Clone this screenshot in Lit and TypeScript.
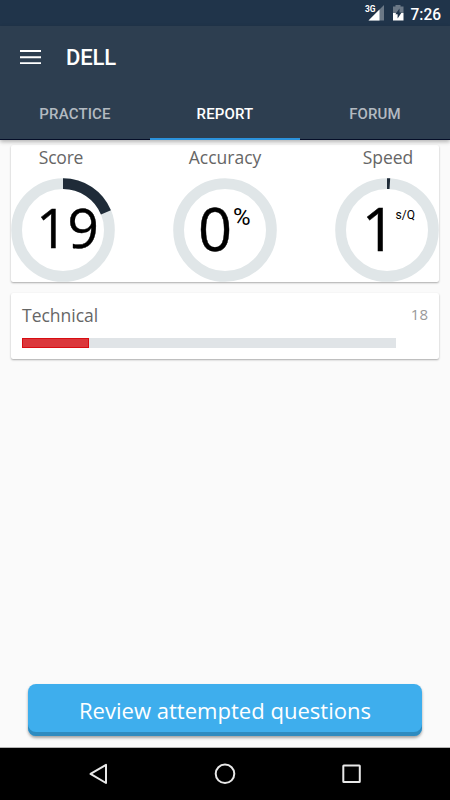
import { LitElement, html, svg, css, nothing } from "lit";
import { customElement, property, state } from "lit/decorators.js";
import { classMap } from "lit/directives/class-map.js";

@customElement("status-bar")
class StatusBar extends LitElement {
  static styles = css`
    :host { display: block; height: 26px; flex: none; background: #20344a; }
    svg { display: block; }
    text { font-family: Roboto, "Liberation Sans", sans-serif; fill: #fff; }
    .net { font-size: 8.5px; font-weight: 700; }
    .clock { font-size: 16px; font-weight: 500; }
  `;
  render() {
    return html`<svg width="450" height="26" viewBox="0 0 450 26">
      <path d="M384 5V20.500H368.500Z" fill="#6b7886" />
      <path d="M379.500 9.500V20.500H368.500Z" fill="#fff" />
      <text class="net" x="365" y="12" textLength="10.500" lengthAdjust="spacingAndGlyphs">3G</text>
      <path d="M395.500 5h5v1.500H403.500V13H393V6.500H395.500Z" fill="#6b7886" />
      <path d="M393 13h10.500v7.500H393z" fill="#fff" />
      <path d="M399.500 8.500L395.300 14.300H397.600V18.500L401.600 12.500H399.500Z" fill="#20344a" />
      <text class="clock" x="410.500" y="19.500" textLength="30.500" lengthAdjust="spacingAndGlyphs">7:26</text>
    </svg>`;
  }
}

@customElement("app-header")
class AppHeader extends LitElement {
  @property() heading = "";
  @property({ attribute: false }) tabs: string[] = [];
  @property({ type: Number }) active = 0;
  static styles = css`
    :host {
      display: flex; flex-direction: column; height: 114px; flex: none;
      background: #2d3e50; color: #fff; z-index: 1;
      font-family: Roboto, "Liberation Sans", sans-serif;
      box-shadow: 0 2px 4px rgba(0, 0, 0, 0.28);
    }
    .bar { display: flex; align-items: center; height: 63px; padding-left: 20px; gap: 25px; }
    .bar svg { display: block; margin-bottom: 1px; }
    .title { font-size: 22px; font-weight: 500; line-height: 26px; letter-spacing: -0.1px; }
    .tabs { flex: 1; display: grid; grid-template-columns: repeat(3, 1fr); }
    .tab {
      display: flex; justify-content: center; padding-top: 16px; box-sizing: border-box;
      font-size: 15px; font-weight: 500; line-height: 18px; letter-spacing: 0.15px;
      color: #b3bac1; border-bottom: 1px solid #050e28;
    }
    .active { color: #fff; border-bottom: 2px solid #2b92dc; }
  `;
  render() {
    return html`
      <div class="bar">
        <svg width="21" height="14" viewBox="0 0 21 14">
          <path d="M0 1h21M0 7.200h21M0 13.200h21" stroke="#fff" stroke-width="2" />
        </svg>
        <span class="title">${this.heading}</span>
      </div>
      <div class="tabs">
        ${this.tabs.map((t, i) => html`<div class=${classMap({ tab: true, active: i === this.active })}>${t}</div>`)}
      </div>`;
  }
}

@customElement("ring-gauge")
class RingGauge extends LitElement {
  @property() label = "";
  @property() value = "";
  @property() unit = "";
  @property({ type: Number }) percent = 0;
  @property({ type: Number }) size = 59.6;
  @property({ type: Number }) valueX = 52;
  @property({ type: Number }) baseline = 73.2;
  @property({ type: Number }) unitSize = 12;
  @property({ type: Number }) unitX = 0;
  @property({ type: Number }) unitY = 0;
  @property() unitFont = "";
  static styles = css`
    :host { display: block; width: 104px; }
    .label {
      font: 17.500px/22px "Open Sans", "Noto Sans", sans-serif; color: #666;
      height: 32px; white-space: nowrap; text-align: center;
    }
    :host(.first) .label { padding-right: 4px; letter-spacing: -0.2px; }
    :host(.last) .label { padding-left: 2px; }
    svg { display: block; }
    text { font-family: "Open Sans", "Noto Sans", sans-serif; fill: #000; }
    .value { stroke: #000; stroke-width: 0.4px; }
    .roboto { font-family: Roboto, "Liberation Sans", sans-serif; }
  `;
  render() {
    return html`
      <div class="label">${this.label}</div>
      <svg width="104" height="104" viewBox="0 0 104 104">
        <circle cx="52" cy="52" r="46.400" fill="none" stroke="#e0e6e8" stroke-width="10.800" />
        ${this.percent
          ? svg`<circle cx="52" cy="52" r="46.400" fill="none" stroke="#1f2b38" stroke-width="10.800"
              pathLength="100" stroke-dasharray="${this.percent} 100" transform="rotate(-90 52 52)" />`
          : nothing}
        <text class="value" x=${this.valueX} y=${this.baseline} font-size=${this.size} text-anchor="middle">${this.value}</text>
        ${this.unit
          ? svg`<text class=${this.unitFont} x=${this.unitX} y=${this.unitY} font-size=${this.unitSize}>${this.unit}</text>`
          : nothing}
      </svg>`;
  }
}

@customElement("app-root")
class AppRoot extends LitElement {
  @state() private topics = [{ name: "Technical", count: 18, percent: 18 }];
  static styles = css`
    :host {
      display: flex; flex-direction: column; width: 450px; height: 800px; overflow: hidden;
      background: #fafafa; font-family: "Open Sans", "Noto Sans", sans-serif;
    }
    main { flex: 1; display: flex; flex-direction: column; padding: 5px 11px 0; gap: 11px; }
    .card { background: #fff; border-radius: 2px; box-shadow: 0 1px 2px rgba(0, 0, 0, 0.32); }
    .gauges { display: flex; justify-content: space-between; height: 137px; padding-top: 1px; box-sizing: border-box; }
    .topic { height: 66px; padding: 9px 11px 0; box-sizing: border-box; }
    .row { display: flex; justify-content: space-between; height: 36px; }
    .name { font-size: 17.500px; line-height: 26px; color: #666; }
    .count { font-size: 15px; line-height: 25px; color: #999; }
    .track { width: 373.500px; height: 10px; background: #e0e4e7; }
    .fill { height: 10px; box-sizing: border-box; background: #db383c; border: 1px solid #d80d12; }
    .review {
      margin: auto 17px 12px; height: 52px; box-sizing: border-box; border-radius: 8px;
      background: #3eaeed; color: #fff; text-align: center; font-size: 22.050px; line-height: 52px;
      box-shadow: inset 0 -4px 0 #2e8bc0, 0 2px 3px rgba(0, 0, 0, 0.35);
    }
    nav { height: 52px; flex: none; background: #000; box-shadow: 0 -1px 0 #b4b4b4; }
    nav svg { display: block; }
  `;
  render() {
    return html`
      <status-bar></status-bar>
      <app-header heading="DELL" .tabs=${["PRACTICE", "REPORT", "FORUM"]} active="1"></app-header>
      <main>
        <section class="card gauges">
          <ring-gauge class="first" label="Score" value="19" percent="18.800" size="54.800" valueX="56.500" baseline="70.400"></ring-gauge>
          <ring-gauge label="Accuracy" value="0" valueX="42" unit="%" unitSize="24" unitX="60" unitY="47.200" unitFont="roboto"></ring-gauge>
          <ring-gauge class="last" label="Speed" value="1" percent="1" valueX="43.700" unit="s/Q" unitSize="12" unitX="60.500" unitY="41.300" unitFont="roboto"></ring-gauge>
        </section>
        ${this.topics.map((t) => html`
          <section class="card topic">
            <div class="row"><span class="name">${t.name}</span><span class="count">${t.count}</span></div>
            <div class="track"><div class="fill" style="width:${t.percent}%"></div></div>
          </section>`)}
        <div class="review">Review attempted questions</div>
      </main>
      <nav>
        <svg width="450" height="52" viewBox="0 0 450 52" fill="none" stroke="#e8e8e8" stroke-width="2">
          <path d="M106 16.800V35L90.500 25.900Z" stroke-linejoin="round" />
          <circle cx="225" cy="25.800" r="9.300" />
          <rect x="343.300" y="17.400" width="16.500" height="16.500" rx="0.500" />
        </svg>
      </nav>`;
  }
}
